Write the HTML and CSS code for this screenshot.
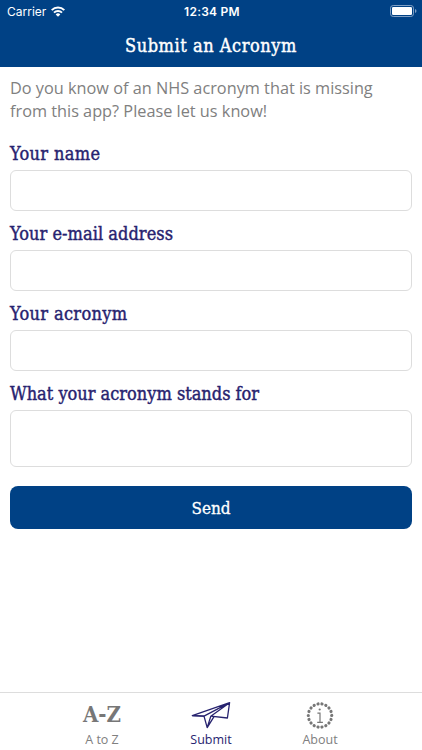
FILE: index.html
```html
<!DOCTYPE html>
<html lang="en">

<head>
    <meta charset="UTF-8">
    <meta name="viewport" content="width=device-width, initial-scale=1.0">
    <title>Submit an Acronym</title>
    <link rel="stylesheet" href="styles.css">
</head>

<body>
    <header>
        <div class="status">
            <div class="carrier">
                <span>Carrier</span>
                <svg width="14" height="11" viewBox="0 0 14 11" fill="none" stroke="#fff" stroke-width="2">
                    <path d="M.7 4.1a9 9 0 0 1 12.6 0M3 6.6a5.7 5.7 0 0 1 8 0" />
                    <path d="M7 10.7 4.7 8.4a3.2 3.2 0 0 1 4.6 0z" fill="#fff" stroke="none" />
                </svg>
            </div>
            <span class="clock">12:34 PM</span>
            <div class="power">
                <svg width="27" height="12" viewBox="0 0 27 12">
                    <rect x=".5" y=".5" width="23" height="11" rx="2.7" fill="none" stroke="#7f9fc4" />
                    <rect x="2" y="2" width="20" height="8" rx="1.3" fill="#fff" />
                    <path d="M25 4v4q1.5-.6 1.5-2T25 4z" fill="#7f9fc4" />
                </svg>
            </div>
        </div>
        <h1>Submit an Acronym</h1>
    </header>

    <main>
        <p class="intro">Do you know of an NHS acronym that is missing from this app? Please let us know!</p>
        <form>
            <label class="label-name" for="name">Your name</label>
            <input type="text" id="name">
            <label class="label-email" for="email">Your e-mail address</label>
            <input type="email" id="email">
            <label class="label-acronym" for="acronym">Your acronym</label>
            <input type="text" id="acronym">
            <label for="meaning">What your acronym stands for</label>
            <textarea id="meaning"></textarea>
            <button type="button">Send</button>
        </form>
    </main>

    <nav>
        <a class="tab">
            <span class="icon az">A-Z</span>
            <span>A to Z</span>
        </a>
        <a class="tab active">
            <span class="icon">
                <svg width="40" height="28" viewBox="0 0 40 28" fill="none" stroke="#27236f" stroke-width="1.3" stroke-linejoin="round">
                    <path d="M1.3 13.6 38.6.7 36.4 16 19.8 14.2 38.6.7 13 14.1z" />
                    <path d="M13 14.1 16.2 25.6 19.8 14.2M16.2 25.6l6.8-11M1.3 13.6l11.7.5" />
                </svg>
            </span>
            <span>Submit</span>
        </a>
        <a class="tab">
            <span class="icon">
                <svg width="28" height="28" viewBox="0 0 28 28" fill="none" stroke="#777">
                    <circle cx="14" cy="13.5" r="11.7" stroke-width="3.2" stroke-linecap="round" pathLength="180" stroke-dasharray="0.01 9.99" />
                    <path d="M11.4 11.2h2.6v9M11.2 20.4h5.7" stroke-width="1.2" />
                    <circle cx="13.7" cy="7.5" r="1.1" fill="#777" stroke="none" />
                </svg>
            </span>
            <span>About</span>
        </a>
    </nav>
</body>

</html>
```
FILE: styles.css
```css
* {
    margin: 0;
    padding: 0;
    box-sizing: border-box;
}

body {
    display: flex;
    flex-direction: column;
    height: 100vh;
    overflow: hidden;
    background: #fff;
    font-family: "Open Sans", sans-serif;
}

header {
    height: 67px;
    background: #004185;
    color: #fff;
}

.status {
    display: grid;
    grid-template-columns: 1fr auto 1fr;
    align-items: center;
    height: 22px;
    padding: 0 5px 0 7px;
    font-family: Inter, sans-serif;
    font-size: 12px;
}

.carrier {
    display: flex;
    align-items: center;
    gap: 5px;
}

.clock {
    font-weight: 600;
    letter-spacing: 0.25px;
}

.power {
    display: flex;
    justify-content: flex-end;
}

h1,
label,
button,
.az {
    font-family: "DejaVu Serif Condensed", "DejaVu Serif", serif;
    font-stretch: condensed;
    font-weight: normal;
}

h1 {
    height: 45px;
    line-height: 47px;
    text-align: center;
    font-size: 18px;
    letter-spacing: 0.55px;
    -webkit-text-stroke: 0.4px;
}

main {
    flex: 1;
    padding: 10px 10px 0;
}

.intro {
    height: 66px;
    line-height: 22.5px;
    font-size: 16.3px;
    color: #808080;
}

form {
    display: flex;
    flex-direction: column;
}

label {
    height: 27px;
    line-height: 21px;
    white-space: nowrap;
    font-size: 18px;
    color: #27236f;
    -webkit-text-stroke: 0.4px;
}

.label-name {
    letter-spacing: 0.35px;
}

.label-email {
    letter-spacing: 0.05px;
}

.label-acronym {
    letter-spacing: 0.35px;
}

input,
textarea {
    width: 100%;
    height: 41px;
    padding: 0 10px;
    margin-bottom: 12px;
    font: inherit;
    border: 1px solid #ddd;
    border-radius: 6px;
    outline: none;
}

textarea {
    height: 57px;
    margin-bottom: 19px;
    resize: none;
}

button {
    height: 43px;
    border: none;
    border-radius: 8px;
    background: #004185;
    color: #fff;
    font-size: 17px;
    -webkit-text-stroke: 0.3px;
}

nav {
    display: flex;
    justify-content: center;
    height: 58px;
    padding-top: 9px;
    border-top: 1px solid #ddd;
}

.tab {
    display: flex;
    flex-direction: column;
    align-items: center;
    width: 109px;
    font-size: 12.5px;
    line-height: 19px;
    color: #808080;
}

.tab.active {
    color: #27236f;
}

.icon {
    display: flex;
    align-items: center;
    height: 28px;
}

.az {
    padding-bottom: 4px;
    font-size: 22px;
    font-weight: bold;
    color: #777;
}
```
